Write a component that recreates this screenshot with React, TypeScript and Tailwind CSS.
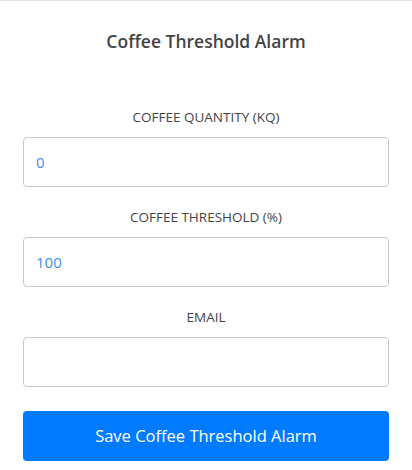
export default function App() {
  return (
    <div
      className="w-full min-h-[470px] bg-white border-t border-[#e3e3e3]"
      style={{ fontFamily: '"Open Sans", sans-serif' }}
    >
      <div className="px-[23px]">
        {/* Title */}
        <h1 className="pt-[28px] text-center text-[17.5px] leading-[24px] font-semibold text-[#444444]">
          Coffee Threshold Alarm
        </h1>

        <form className="mt-[54px] flex flex-col">
          {/* Quantity */}
          <label className="text-center text-[13.5px] leading-[20px] text-[#444444]">
            COFFEE QUANTITY (KQ)
          </label>
          <input
            type="text"
            defaultValue="0"
            className="mt-[10px] h-[50px] w-full rounded-[4px] border border-[#c8c8c8] px-[12px] text-[15px] text-[#3b8fef] outline-none"
          />

          {/* Threshold */}
          <label className="mt-[20px] text-center text-[13.5px] leading-[20px] text-[#444444]">
            COFFEE THRESHOLD (%)
          </label>
          <input
            type="text"
            defaultValue="100"
            className="mt-[10px] h-[50px] w-full rounded-[4px] border border-[#c8c8c8] px-[12px] text-[15px] text-[#3b8fef] outline-none"
          />

          {/* Email */}
          <label className="mt-[20px] text-center text-[13.5px] leading-[20px] text-[#444444]">
            EMAIL
          </label>
          <input
            type="email"
            className="mt-[10px] h-[50px] w-full rounded-[4px] border border-[#c8c8c8] px-[12px] text-[15px] text-[#3b8fef] outline-none"
          />

          <button
            type="button"
            className="mt-[24px] h-[50px] w-full rounded-[4px] bg-[#007bff] text-[16.5px] text-white"
          >
            Save Coffee Threshold Alarm
          </button>
        </form>
      </div>
    </div>
  );
}
